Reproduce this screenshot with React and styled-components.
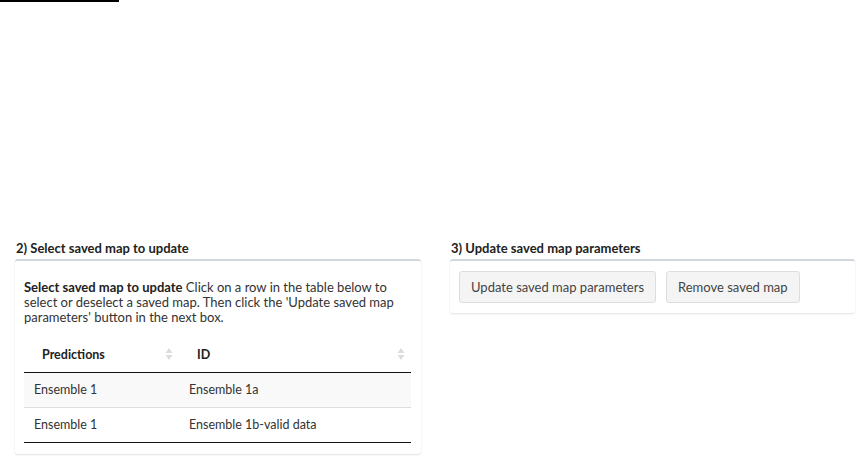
import React from "react";
import styled, { createGlobalStyle } from "styled-components";

const Global = createGlobalStyle`
  html, body { margin: 0; padding: 0; background: #fff; }
  body { font-family: Lato, "Open Sans", sans-serif; color: #333; font-size: 13px; }
  * { box-sizing: border-box; }
`;

const Page = styled.div`
  width: 864px;
  height: 463px;
  overflow: hidden;
`;

const TopRule = styled.div`
  width: 119px;
  height: 2px;
  background: #000;
`;

const Spacer = styled.div`
  height: 238px;
`;

const Row = styled.div`
  display: grid;
  grid-template-columns: 406px 405px;
  column-gap: 29px;
  padding-left: 15px;
`;

const Column = styled.div`
  display: flex;
  flex-direction: column;
`;

const Heading = styled.h4`
  margin: 0 0 2px 1px;
  font-size: 13px;
  font-weight: 700;
  line-height: 17px;
  color: #222;
`;

const Box = styled.div`
  background: #fff;
  border-top: 2px solid #d2d6de;
  border-radius: 3px;
  box-shadow: 0 1px 2px rgba(0, 0, 0, 0.12);
  padding: ${(p) => p.$pad};
`;

const Para = styled.p`
  margin: 0 0 12px;
  font-size: 13px;
  line-height: 15px;
  color: #333;
  b { color: #222; }
`;

const Table = styled.table`
  width: 100%;
  border-collapse: collapse;
  font-size: 12.5px;
  border-bottom: 1px solid #111;
`;

const Th = styled.th`
  position: relative;
  text-align: left;
  font-weight: 700;
  color: #222;
  padding: 0 18px;
  height: 35px;
  border-bottom: 1px solid #111;
  width: ${(p) => p.$w || "auto"};
`;

const Td = styled.td`
  padding: 0 10px;
  height: 35px;
  color: #333;
  border-top: ${(p) => (p.$first ? "none" : "1px solid #ddd")};
`;

const Tr = styled.tr`
  background: ${(p) => (p.$odd ? "#f9f9f9" : "#fff")};
`;

const SortIcon = styled.svg`
  position: absolute;
  right: 6px;
  top: 50%;
  transform: translateY(-50%);
`;

const Sort = () => (
  <SortIcon width="8" height="14" viewBox="0 0 8 14">
    <path d="M4 1 L7.5 6 H0.5 Z" fill="#dcdcdc" />
    <path d="M4 13 L7.5 8 H0.5 Z" fill="#dcdcdc" />
  </SortIcon>
);

const ButtonRow = styled.div`
  display: flex;
  gap: 10px;
`;

const Button = styled.button`
  font-family: inherit;
  font-size: 13px;
  color: #444;
  background: #f4f4f4;
  border: 1px solid #ddd;
  border-radius: 3px;
  height: 32px;
  padding: 0 11px;
  cursor: pointer;
`;

export default function App() {
  return (
    <Page>
      <Global />
      <TopRule />
      <Spacer />
      <Row>
        <Column>
          <Heading>2) Select saved map to update</Heading>
          <Box $pad="19px 10px 11px 9px">
            <Para>
              <b>Select saved map to update</b> Click on a row in the table below to
              select or deselect a saved map. Then click the 'Update saved map
              parameters' button in the next box.
            </Para>
            <Table>
              <thead>
                <tr>
                  <Th $w="155px">Predictions<Sort /></Th>
                  <Th>ID<Sort /></Th>
                </tr>
              </thead>
              <tbody>
                <Tr $odd>
                  <Td $first>Ensemble 1</Td>
                  <Td $first>Ensemble 1a</Td>
                </Tr>
                <Tr>
                  <Td>Ensemble 1</Td>
                  <Td>Ensemble 1b-valid data</Td>
                </Tr>
              </tbody>
            </Table>
          </Box>
        </Column>
        <Column>
          <Heading>3) Update saved map parameters</Heading>
          <Box $pad="10px 9px 10px 9px">
            <ButtonRow>
              <Button>Update saved map parameters</Button>
              <Button>Remove saved map</Button>
            </ButtonRow>
          </Box>
        </Column>
      </Row>
    </Page>
  );
}
